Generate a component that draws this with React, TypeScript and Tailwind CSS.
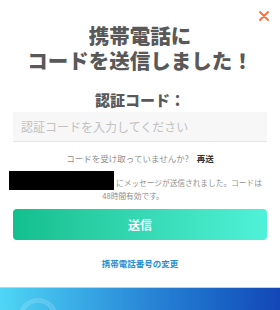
export default function App() {
  return (
    <div
      className="relative flex h-[310px] w-[280px] flex-col overflow-hidden bg-white text-[#595959]"
      style={{ fontFamily: '"Noto Sans CJK JP", "Noto Sans", sans-serif' }}
    >
      <button aria-label="閉じる" className="absolute right-[11px] top-[11px] h-[10px] w-[10px]">
        <svg viewBox="0 0 10 10" className="h-[10px] w-[10px]">
          <path d="M1 1 L9 9 M9 1 L1 9" stroke="#ff6b35" strokeWidth="1.8" strokeLinecap="round" />
        </svg>
      </button>

      <h1 className="mt-[23px] text-center text-[20.5px] font-black leading-[24.5px] text-[#595959]">
        <span className="block">携帯電話に</span>
        <span className="block">コードを送信しました！</span>
      </h1>

      <h2 className="mt-[18px] text-center text-[15px] font-black leading-[20px] text-[#595959]">認証コード：</h2>

      <div className="mx-[13px] mt-[2px] flex h-[30px] items-center border-b border-[#e6e6e6] bg-[#f7f7f7] px-[8px]">
        <span className="text-[12px] leading-[14px] text-[#c2c2c2]">認証コードを入力してください</span>
      </div>

      <div className="mt-[10px] flex items-center justify-center gap-[8px] text-[8.5px] leading-[12px]">
        <span className="text-[#8f8f8f]">コードを受け取っていませんか?</span>
        <span className="font-bold text-[#333]">再送</span>
      </div>

      <div className="ml-[9px] mt-[7px] flex items-end">
        <div className="h-[19px] w-[105px] bg-black" />
        <span className="mb-[1px] ml-[2px] text-[7.7px] leading-[12px] text-[#8f8f8f]">
          にメッセージが送信されました。コードは
        </span>
      </div>
      <div className="w-[266px] text-center text-[7.7px] leading-[12px] text-[#8f8f8f]">48時間有効です。</div>

      <button className="mx-[13px] mt-[7px] flex h-[31px] items-center justify-center rounded-[4px] bg-linear-to-r from-[#12bf8d] to-[#4ff2d8] text-[12px] font-bold text-white">
        送信
      </button>

      <div className="mt-[17px] text-center text-[8.5px] font-bold leading-[12px] text-[#2b8fd0]">携帯電話番号の変更</div>

      <div className="relative mt-[18px] flex-1 overflow-hidden border-t border-[#9ddcf5] bg-linear-to-r from-[#4fd6f5] via-[#2b8ad8] to-[#1446b7]">
        <div className="absolute left-[18px] top-[10px] h-[40px] w-[40px] rounded-full border-[5px] border-white/15" />
      </div>
    </div>
  );
}
